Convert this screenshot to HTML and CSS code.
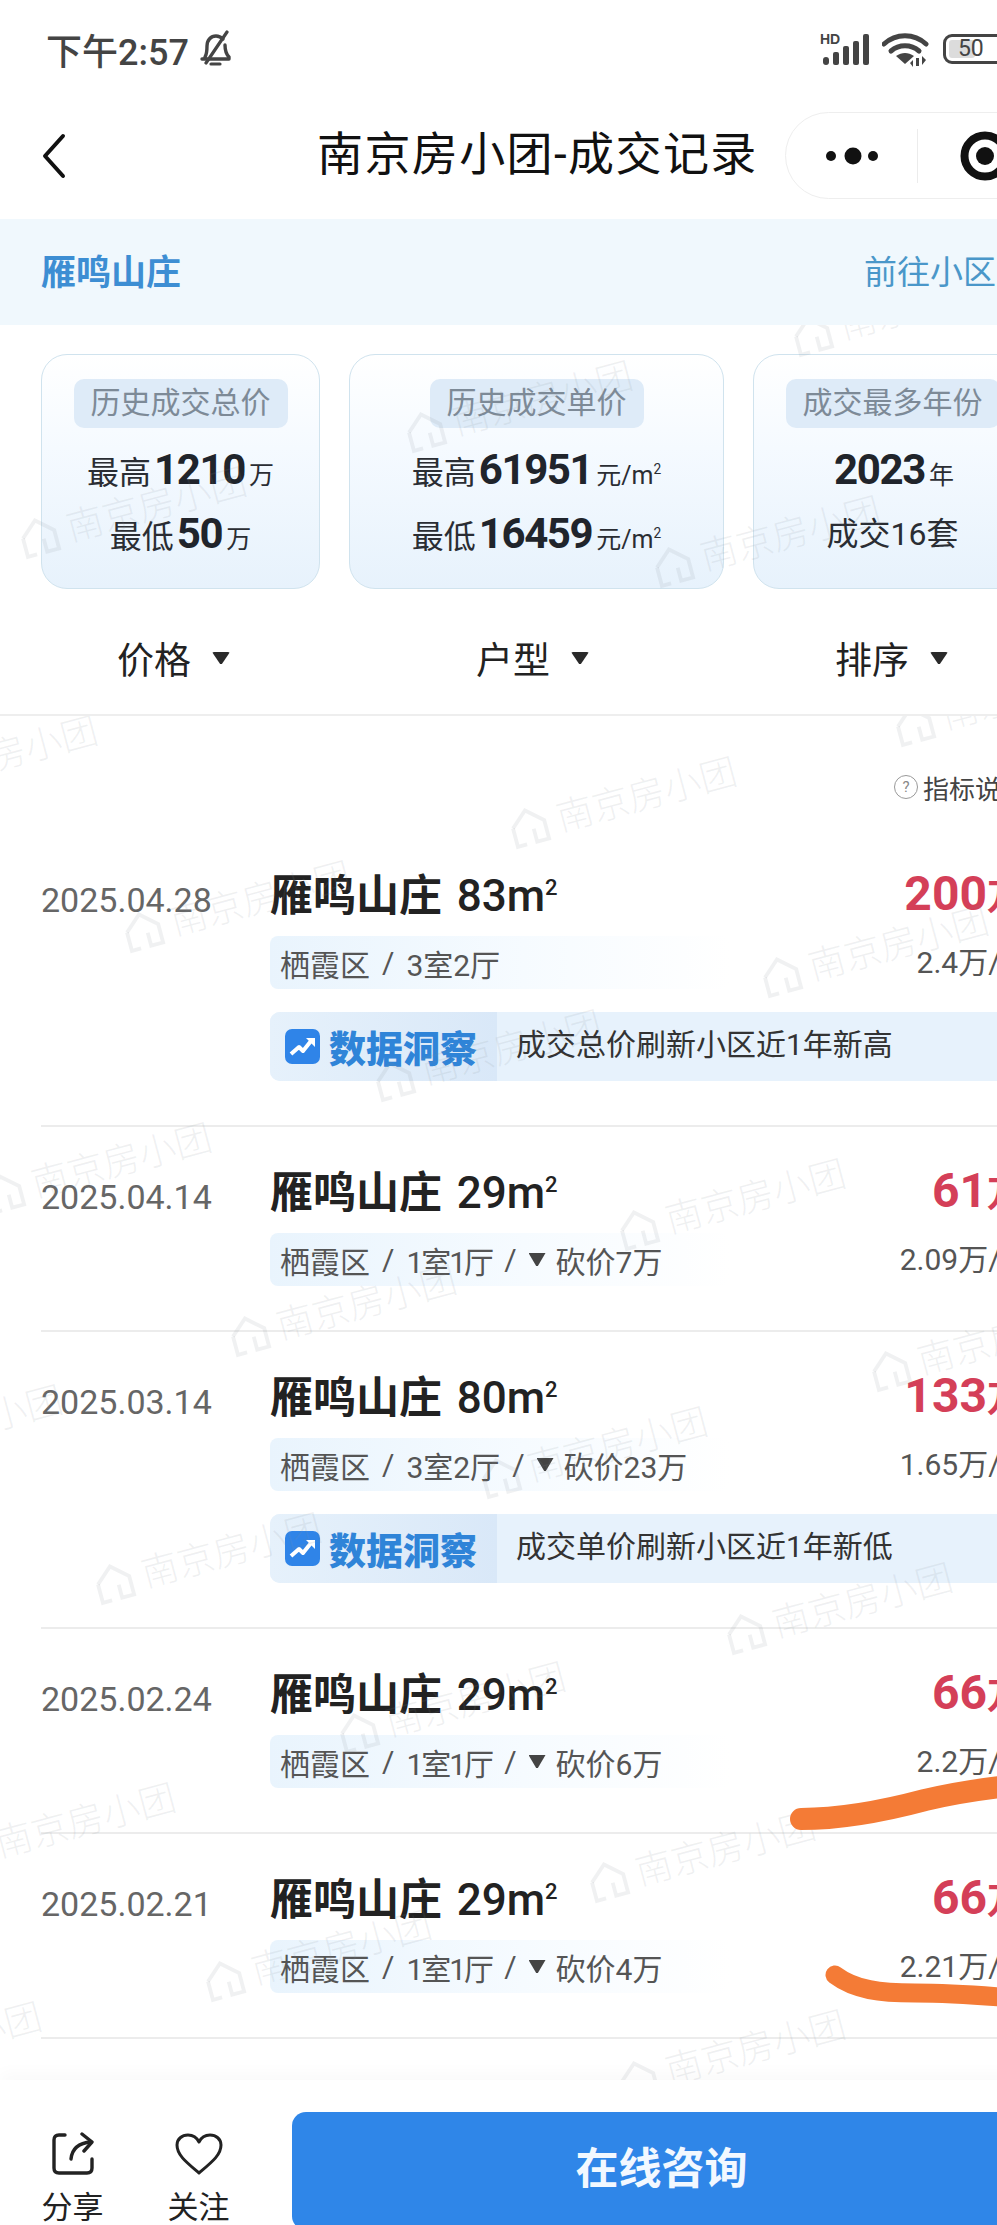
FILE: index.html
```html
<!DOCTYPE html>
<html lang="zh-CN">
<head>
<meta charset="utf-8">
<title>南京房小团-成交记录</title>
<link rel="stylesheet" href="styles.css">
</head>
<body>
<div class="page">
  <div class="top">
    <div class="status">
      <span class="time">下午2:57</span>
      <svg class="bell" viewBox="0 0 36 38"><path d="M8 27c2-3 2-6 2-11 0-6 4-10 9-10 3 0 5 1 7 3M28 15c0 6 1 9 4 12v2H5" fill="none" stroke="#444" stroke-width="3.4" stroke-linejoin="round" stroke-linecap="round"/><path d="M14 34h9M9 33 30 2" fill="none" stroke="#444" stroke-width="3.2" stroke-linecap="round"/></svg>
      <div class="status-right">
        <svg class="signal" viewBox="0 0 50 33"><text x="0" y="11" class="hd">HD</text><g fill="#444"><rect x="3" y="24" width="6" height="8" rx="3"/><rect x="13" y="19" width="6" height="13" rx="2"/><rect x="23" y="13" width="6" height="19" rx="2"/><rect x="33" y="8" width="6" height="24" rx="2"/><rect x="43" y="1" width="6" height="31" rx="2"/></g></svg>
        <svg class="wifi" viewBox="0 0 48 36"><g fill="none" stroke="#444" stroke-width="5" stroke-linecap="round"><path d="M2 13c12-11 30-11 42 0"/><path d="M9 20c8-7 20-7 28 0"/></g><path d="M14 26c6-4 12-4 18 0l-9 8z" fill="#444" transform="translate(0 -1)"/><path d="M31 36v-7l-3 3zM37 27v8h-3v-8zM40 25v9l4-5z" fill="#444"/></svg>
        <div class="battery"><span class="battery-fill"></span><span class="battery-num">50</span></div>
      </div>
    </div>
    <div class="nav">
      <svg class="back" viewBox="0 0 26 46"><path d="M22 3 4 23l18 20" fill="none" stroke="#111" stroke-width="4" stroke-linecap="round" stroke-linejoin="round"/></svg>
      <div class="nav-title">南京房小团-成交记录</div>
      <div class="capsule">
        <svg class="dots" viewBox="0 0 60 20"><circle cx="7" cy="10" r="5" fill="#111"/><circle cx="29" cy="10" r="8.5" fill="#111"/><circle cx="49" cy="10" r="5" fill="#111"/></svg>
        <span class="capsule-line"></span>
        <svg class="target" viewBox="0 0 50 50"><circle cx="25" cy="25" r="20.5" fill="none" stroke="#111" stroke-width="8"/><circle cx="25" cy="25" r="9" fill="#111"/></svg>
      </div>
    </div>
    <div class="band">
      <span class="band-name">雁鸣山庄</span>
      <span class="band-link">前往小区</span>
    </div>
  </div>

  <div class="cards">
    <div class="card card-a">
      <div class="card-label">历史成交总价</div>
      <div class="card-val">最高<b>1210</b><small>万</small></div>
      <div class="card-val">最低<b>50</b><small>万</small></div>
    </div>
    <div class="card card-b">
      <div class="card-label">历史成交单价</div>
      <div class="card-val">最高<b>61951</b><small>元/m<sup>2</sup></small></div>
      <div class="card-val">最低<b>16459</b><small>元/m<sup>2</sup></small></div>
    </div>
    <div class="card card-a">
      <div class="card-label">成交最多年份</div>
      <div class="card-val"><b>2023</b><small>年</small></div>
      <div class="card-val">成交16套</div>
    </div>
  </div>

  <div class="filters">
    <div class="filter">价格<span class="tri"></span></div>
    <div class="filter">户型<span class="tri"></span></div>
    <div class="filter">排序<span class="tri"></span></div>
  </div>

  <div class="help"><span class="help-icon">?</span>指标说明</div>

  <div class="row">
    <div class="date">2025.04.28</div>
    <div class="name">雁鸣山庄 <span class="area">83m<sup>2</sup></span></div>
    <div class="price">200<small>万</small></div>
    <div class="chip"><span>栖霞区</span><span>/</span><span>3室2厅</span></div>
    <div class="unit">2.4万/m<sup>2</sup></div>
    <div class="insight">
      <div class="insight-tag">
        <svg class="insight-icon" viewBox="0 0 35 35"><rect width="35" height="35" rx="7" fill="#2f84e8"/><path d="M6 25l8-7 4 4 8-10" fill="none" stroke="#fff" stroke-width="4" stroke-linejoin="round"/><path d="M21 9h9v9z" fill="#fff"/></svg>
        <span>数据洞察</span>
      </div>
      <div class="insight-text">成交总价刷新小区近1年新高</div>
    </div>
  </div>

  <div class="row">
    <div class="date">2025.04.14</div>
    <div class="name">雁鸣山庄 <span class="area">29m<sup>2</sup></span></div>
    <div class="price">61<small>万</small></div>
    <div class="chip"><span>栖霞区</span><span>/</span><span class="tight">1室1厅</span><span>/</span><span class="cut"><i class="down"></i>砍价7万</span></div>
    <div class="unit">2.09万/m<sup>2</sup></div>
  </div>

  <div class="row">
    <div class="date">2025.03.14</div>
    <div class="name">雁鸣山庄 <span class="area">80m<sup>2</sup></span></div>
    <div class="price">133<small>万</small></div>
    <div class="chip"><span>栖霞区</span><span>/</span><span>3室2厅</span><span>/</span><span class="cut"><i class="down"></i>砍价23万</span></div>
    <div class="unit">1.65万/m<sup>2</sup></div>
    <div class="insight">
      <div class="insight-tag">
        <svg class="insight-icon" viewBox="0 0 35 35"><rect width="35" height="35" rx="7" fill="#2f84e8"/><path d="M6 25l8-7 4 4 8-10" fill="none" stroke="#fff" stroke-width="4" stroke-linejoin="round"/><path d="M21 9h9v9z" fill="#fff"/></svg>
        <span>数据洞察</span>
      </div>
      <div class="insight-text">成交单价刷新小区近1年新低</div>
    </div>
  </div>

  <div class="row">
    <div class="date">2025.02.24</div>
    <div class="name">雁鸣山庄 <span class="area">29m<sup>2</sup></span></div>
    <div class="price">66<small>万</small></div>
    <div class="chip"><span>栖霞区</span><span>/</span><span class="tight">1室1厅</span><span>/</span><span class="cut"><i class="down"></i>砍价6万</span></div>
    <div class="unit">2.2万/m<sup>2</sup></div>
  </div>

  <div class="row">
    <div class="date">2025.02.21</div>
    <div class="name">雁鸣山庄 <span class="area">29m<sup>2</sup></span></div>
    <div class="price">66<small>万</small></div>
    <div class="chip"><span>栖霞区</span><span>/</span><span class="tight">1室1厅</span><span>/</span><span class="cut"><i class="down"></i>砍价4万</span></div>
    <div class="unit">2.21万/m<sup>2</sup></div>
  </div>

  <div class="footer">
    <div class="foot-item">
      <svg class="foot-icon" viewBox="0 0 44 44"><path d="M14 3H8Q3 3 3 8v28q0 5 5 5h28q5 0 5-5V27" fill="none" stroke="#222" stroke-width="3.4" stroke-linecap="round"/><path d="M20 27C21 17 27 11 40 10" fill="none" stroke="#222" stroke-width="3.4" stroke-linecap="round"/><path d="M31 2l10 8-8 9" fill="none" stroke="#222" stroke-width="3.4" stroke-linecap="round" stroke-linejoin="round"/></svg>
      <span>分享</span>
    </div>
    <div class="foot-item">
      <svg class="foot-icon foot-heart" viewBox="0 0 50 44"><path d="M25 41C12 30 3 23 3 13 3 7 8 3 14 3c5 0 9 3 11 7 2-4 6-7 11-7 6 0 11 4 11 10 0 10-9 17-22 28z" fill="none" stroke="#222" stroke-width="3" stroke-linejoin="round"/></svg>
      <span>关注</span>
    </div>
    <div class="cta">在线咨询</div>
  </div>

  <div class="marks">
    <div class="wm w1"><svg viewBox="0 0 40 42"><path d="M3 18 20 3l17 15v20H24V24" fill="none" stroke="currentColor" stroke-width="4"/><path d="M3 18v20h10" fill="none" stroke="currentColor" stroke-width="4"/></svg>南京房小团</div>
    <div class="wm w2"><svg viewBox="0 0 40 42"><path d="M3 18 20 3l17 15v20H24V24" fill="none" stroke="currentColor" stroke-width="4"/><path d="M3 18v20h10" fill="none" stroke="currentColor" stroke-width="4"/></svg>南京房小团</div>
    <div class="wm w3"><svg viewBox="0 0 40 42"><path d="M3 18 20 3l17 15v20H24V24" fill="none" stroke="currentColor" stroke-width="4"/><path d="M3 18v20h10" fill="none" stroke="currentColor" stroke-width="4"/></svg>南京房小团</div>
    <div class="wm w4"><svg viewBox="0 0 40 42"><path d="M3 18 20 3l17 15v20H24V24" fill="none" stroke="currentColor" stroke-width="4"/><path d="M3 18v20h10" fill="none" stroke="currentColor" stroke-width="4"/></svg>南京房小团</div>
    <div class="wm w5"><svg viewBox="0 0 40 42"><path d="M3 18 20 3l17 15v20H24V24" fill="none" stroke="currentColor" stroke-width="4"/><path d="M3 18v20h10" fill="none" stroke="currentColor" stroke-width="4"/></svg>南京房小团</div>
    <div class="wm w6"><svg viewBox="0 0 40 42"><path d="M3 18 20 3l17 15v20H24V24" fill="none" stroke="currentColor" stroke-width="4"/><path d="M3 18v20h10" fill="none" stroke="currentColor" stroke-width="4"/></svg>南京房小团</div>
    <div class="wm w7"><svg viewBox="0 0 40 42"><path d="M3 18 20 3l17 15v20H24V24" fill="none" stroke="currentColor" stroke-width="4"/><path d="M3 18v20h10" fill="none" stroke="currentColor" stroke-width="4"/></svg>南京房小团</div>
    <div class="wm w8"><svg viewBox="0 0 40 42"><path d="M3 18 20 3l17 15v20H24V24" fill="none" stroke="currentColor" stroke-width="4"/><path d="M3 18v20h10" fill="none" stroke="currentColor" stroke-width="4"/></svg>南京房小团</div>
    <div class="wm w9"><svg viewBox="0 0 40 42"><path d="M3 18 20 3l17 15v20H24V24" fill="none" stroke="currentColor" stroke-width="4"/><path d="M3 18v20h10" fill="none" stroke="currentColor" stroke-width="4"/></svg>南京房小团</div>
    <div class="wm w10"><svg viewBox="0 0 40 42"><path d="M3 18 20 3l17 15v20H24V24" fill="none" stroke="currentColor" stroke-width="4"/><path d="M3 18v20h10" fill="none" stroke="currentColor" stroke-width="4"/></svg>南京房小团</div>
    <div class="wm w11"><svg viewBox="0 0 40 42"><path d="M3 18 20 3l17 15v20H24V24" fill="none" stroke="currentColor" stroke-width="4"/><path d="M3 18v20h10" fill="none" stroke="currentColor" stroke-width="4"/></svg>南京房小团</div>
    <div class="wm w12"><svg viewBox="0 0 40 42"><path d="M3 18 20 3l17 15v20H24V24" fill="none" stroke="currentColor" stroke-width="4"/><path d="M3 18v20h10" fill="none" stroke="currentColor" stroke-width="4"/></svg>南京房小团</div>
    <div class="wm w13"><svg viewBox="0 0 40 42"><path d="M3 18 20 3l17 15v20H24V24" fill="none" stroke="currentColor" stroke-width="4"/><path d="M3 18v20h10" fill="none" stroke="currentColor" stroke-width="4"/></svg>南京房小团</div>
    <div class="wm w14"><svg viewBox="0 0 40 42"><path d="M3 18 20 3l17 15v20H24V24" fill="none" stroke="currentColor" stroke-width="4"/><path d="M3 18v20h10" fill="none" stroke="currentColor" stroke-width="4"/></svg>南京房小团</div>
    <div class="wm w15"><svg viewBox="0 0 40 42"><path d="M3 18 20 3l17 15v20H24V24" fill="none" stroke="currentColor" stroke-width="4"/><path d="M3 18v20h10" fill="none" stroke="currentColor" stroke-width="4"/></svg>南京房小团</div>
    <div class="wm w16"><svg viewBox="0 0 40 42"><path d="M3 18 20 3l17 15v20H24V24" fill="none" stroke="currentColor" stroke-width="4"/><path d="M3 18v20h10" fill="none" stroke="currentColor" stroke-width="4"/></svg>南京房小团</div>
    <div class="wm w17"><svg viewBox="0 0 40 42"><path d="M3 18 20 3l17 15v20H24V24" fill="none" stroke="currentColor" stroke-width="4"/><path d="M3 18v20h10" fill="none" stroke="currentColor" stroke-width="4"/></svg>南京房小团</div>
    <div class="wm w18"><svg viewBox="0 0 40 42"><path d="M3 18 20 3l17 15v20H24V24" fill="none" stroke="currentColor" stroke-width="4"/><path d="M3 18v20h10" fill="none" stroke="currentColor" stroke-width="4"/></svg>南京房小团</div>
    <div class="wm w19"><svg viewBox="0 0 40 42"><path d="M3 18 20 3l17 15v20H24V24" fill="none" stroke="currentColor" stroke-width="4"/><path d="M3 18v20h10" fill="none" stroke="currentColor" stroke-width="4"/></svg>南京房小团</div>
    <div class="wm w20"><svg viewBox="0 0 40 42"><path d="M3 18 20 3l17 15v20H24V24" fill="none" stroke="currentColor" stroke-width="4"/><path d="M3 18v20h10" fill="none" stroke="currentColor" stroke-width="4"/></svg>南京房小团</div>
    <div class="wm w21"><svg viewBox="0 0 40 42"><path d="M3 18 20 3l17 15v20H24V24" fill="none" stroke="currentColor" stroke-width="4"/><path d="M3 18v20h10" fill="none" stroke="currentColor" stroke-width="4"/></svg>南京房小团</div>
    <div class="wm w22"><svg viewBox="0 0 40 42"><path d="M3 18 20 3l17 15v20H24V24" fill="none" stroke="currentColor" stroke-width="4"/><path d="M3 18v20h10" fill="none" stroke="currentColor" stroke-width="4"/></svg>南京房小团</div>
    <div class="wm w23"><svg viewBox="0 0 40 42"><path d="M3 18 20 3l17 15v20H24V24" fill="none" stroke="currentColor" stroke-width="4"/><path d="M3 18v20h10" fill="none" stroke="currentColor" stroke-width="4"/></svg>南京房小团</div>
    <div class="wm w24"><svg viewBox="0 0 40 42"><path d="M3 18 20 3l17 15v20H24V24" fill="none" stroke="currentColor" stroke-width="4"/><path d="M3 18v20h10" fill="none" stroke="currentColor" stroke-width="4"/></svg>南京房小团</div>
  </div>

  <svg class="scribble" viewBox="0 0 997 2225">
    <path d="M801 1819C840 1819 880 1812 925 1800C950 1794 975 1790 1000 1787" fill="none" stroke="#f47b36" stroke-width="22" stroke-linecap="round"/>
    <path d="M835 1975C855 1990 880 1993 915 1993C945 1993 975 1995 1000 1997" fill="none" stroke="#f47b36" stroke-width="19" stroke-linecap="round"/>
  </svg>
</div>
</body>
</html>
```

FILE: styles.css
```css
html, body {
  margin: 0;
  padding: 0;
  width: 997px;
  height: 2225px;
  overflow: hidden;
  background: #fff;
}

.page {
  position: relative;
  width: 1078px;
  height: 2225px;
  overflow: hidden;
  background: #fff;
  font-family: Roboto, "Noto Sans CJK SC", sans-serif;
  color: #222;
}

sup {
  font-size: 0.55em;
  line-height: 0;
  vertical-align: baseline;
  position: relative;
  top: -0.75em;
}

/* top */
.top {
  position: relative;
  z-index: 3;
  background: #fff;
}

.status {
  display: flex;
  align-items: center;
  height: 92px;
  padding: 6px 0 0 46px;
  box-sizing: border-box;
  color: #444;
}

.time {
  font-size: 36px;
  font-weight: 500;
}

.bell {
  width: 36px;
  height: 38px;
  margin-left: 8px;
}

.status-right {
  display: flex;
  align-items: center;
  margin-left: 587px;
}

.signal {
  width: 50px;
  height: 33px;
}

.hd {
  font: 700 14px "Liberation Sans", sans-serif;
  fill: #444;
}

.wifi {
  width: 48px;
  height: 36px;
  margin-left: 12px;
}

.battery {
  position: relative;
  width: 62px;
  height: 30px;
  margin-left: 13px;
  border: 3px solid #444;
  border-radius: 9px;
  box-sizing: border-box;
}

.battery-fill {
  display: block;
  width: 26px;
  height: 18px;
  margin: 3px;
  background: #dcdcdc;
  border-radius: 3px;
}

.battery-num {
  position: absolute;
  left: 12px;
  top: 0;
  font-size: 23px;
  line-height: 24px;
  color: #444;
}

.nav {
  display: flex;
  align-items: center;
  height: 127px;
  padding-left: 41px;
}

.back {
  width: 26px;
  height: 46px;
}

.nav-title {
  margin-left: 250px;
  margin-bottom: 3px;
  font-size: 46px;
  letter-spacing: 1.4px;
  line-height: 60px;
  color: #111;
  white-space: nowrap;
}

.capsule {
  display: flex;
  align-items: center;
  width: 280px;
  height: 87px;
  margin-left: 27px;
  border: 1.5px solid #eee;
  border-radius: 44px;
  box-sizing: border-box;
  flex: none;
}

.dots {
  width: 60px;
  height: 20px;
  margin-left: 38px;
}

.capsule-line {
  width: 1px;
  height: 54px;
  margin-left: 33px;
  background: #ececec;
}

.target {
  width: 50px;
  height: 50px;
  margin-left: 42px;
}

.band {
  display: flex;
  align-items: center;
  justify-content: space-between;
  height: 106px;
  padding: 0 82px 5px 41px;
  box-sizing: border-box;
  background: #f0f8fd;
}

.band-name {
  font-size: 35px;
  font-weight: 700;
  color: #3d8ed3;
}

.band-link {
  font-size: 33px;
  color: #4a97c9;
}

/* cards */
.cards {
  display: flex;
  gap: 29px;
  padding: 29px 0 0 41px;
}

.card {
  flex: none;
  height: 235px;
  padding-top: 24px;
  border: 1.5px solid #d0e3ee;
  border-radius: 26px;
  background: linear-gradient(180deg, #fff 0%, #f5faff 40%, #e7f2fc 100%);
  box-sizing: border-box;
  display: flex;
  flex-direction: column;
  align-items: center;
}

.card-a {
  width: 279px;
}

.card-b {
  width: 375px;
}

.card-label {
  height: 49px;
  line-height: 47px;
  padding: 0 17px;
  font-size: 30px;
  color: #7d8a97;
  background: #deebf8;
  border-radius: 10px;
  white-space: nowrap;
}

.card-val {
  height: 64px;
  display: flex;
  align-items: baseline;
  justify-content: center;
  line-height: 64px;
  font-size: 32px;
  color: #2a2d33;
  white-space: nowrap;
}

.card-label + .card-val {
  margin-top: 10px;
}

.card-val b {
  font-size: 42px;
  font-weight: 700;
  letter-spacing: -1.4px;
  margin: 0 4px 0 3px;
  color: #20242b;
}

.card-val small {
  font-size: 25px;
}

/* filters */
.filters {
  position: relative;
  z-index: 3;
  display: flex;
  gap: 246px;
  align-items: center;
  height: 116px;
  margin-top: 11px;
  padding-left: 117px;
  background: #fff;
  border-bottom: 2px solid #eee;
  box-sizing: border-box;
}

.filter {
  display: flex;
  align-items: center;
  gap: 21px;
  font-size: 37px;
  color: #222;
  margin-top: 2px;
}

.tri {
  width: 18px;
  height: 12px;
  background: #2a2a2a;
  clip-path: polygon(0 0, 100% 0, 55% 100%, 45% 100%);
  border-radius: 2px;
}

/* help */
.help {
  display: flex;
  align-items: center;
  justify-content: flex-end;
  gap: 5px;
  height: 114px;
  padding: 28px 51px 0 0;
  box-sizing: border-box;
  font-size: 26px;
  color: #444;
}

.help-icon {
  width: 22px;
  height: 22px;
  border: 1.5px solid #999;
  border-radius: 50%;
  text-align: center;
  line-height: 22px;
  font-size: 15px;
  color: #888;
}

/* rows */
.row {
  display: grid;
  grid-template-columns: 229px 1fr auto;
  grid-template-rows: 58px 53px;
  row-gap: 11px;
  margin: 0 41px;
  padding: 37px 0 44px;
  border-bottom: 2px solid #ececec;
  box-sizing: border-box;
}

.date {
  grid-column: 1;
  grid-row: 1;
  align-self: center;
  font-size: 34px;
  color: #666;
  line-height: 40px;
  margin-top: 7px;
}

.name {
  grid-column: 2;
  grid-row: 1;
  font-size: 43px;
  font-weight: 700;
  line-height: 58px;
  color: #222;
  white-space: nowrap;
}

.area {
  margin-left: 4px;
  font-size: 44px;
  font-weight: 500;
}

.area sup {
  font-size: 22px;
  font-weight: 500;
}

.price {
  grid-column: 3;
  grid-row: 1;
  align-self: center;
  text-align: right;
  font-size: 48px;
  font-weight: 700;
  line-height: 58px;
  color: #d43f58;
  padding-right: 14px;
}

.price small {
  font-size: 36px;
  font-weight: 700;
}

.chip {
  grid-column: 2;
  grid-row: 2;
  display: flex;
  align-items: center;
  gap: 12px;
  width: 460px;
  height: 53px;
  padding-left: 10px;
  box-sizing: border-box;
  font-size: 30px;
  color: #555;
  background: linear-gradient(90deg, #e9f4fd 0%, #f6fbff 55%, rgba(255, 255, 255, 0) 100%);
  border-radius: 8px;
  white-space: nowrap;
}

.tight {
  letter-spacing: -2px;
}

.cut {
  display: flex;
  align-items: center;
  gap: 10px;
}

.down {
  width: 17px;
  height: 13px;
  background: #444;
  clip-path: polygon(0 0, 100% 0, 55% 100%, 45% 100%);
}

.unit {
  grid-column: 3;
  grid-row: 2;
  align-self: center;
  text-align: right;
  font-size: 30px;
  color: #555;
  line-height: 53px;
}

.unit sup {
  font-size: 18px;
}

.insight {
  grid-column: 2 / 4;
  grid-row: 3;
  display: flex;
  align-items: stretch;
  height: 69px;
  margin-top: 12px;
  background: #e7f2fc;
  border-radius: 10px;
  overflow: hidden;
}

.insight-tag {
  display: flex;
  align-items: center;
  gap: 9px;
  width: 227px;
  padding-left: 15px;
  box-sizing: border-box;
  background: linear-gradient(90deg, #e6f1fb, #d9e8f8);
  font-size: 37px;
  font-weight: 900;
  color: #2f84d8;
  white-space: nowrap;
}

.insight-icon {
  width: 35px;
  height: 35px;
  flex: none;
}

.insight-text {
  margin-left: 19px;
  line-height: 66px;
  font-size: 30px;
  color: #333;
  white-space: nowrap;
}

/* footer */
.footer {
  position: relative;
  z-index: 3;
  display: flex;
  align-items: flex-start;
  height: 150px;
  margin-top: 41px;
  padding: 32px 0 0 41px;
  box-sizing: border-box;
  background: #fff;
  box-shadow: 0 -8px 14px rgba(0, 0, 0, 0.025);
}

.foot-item {
  display: flex;
  flex-direction: column;
  align-items: center;
  width: 63px;
  margin-right: 63px;
  padding-top: 20px;
  font-size: 31px;
  line-height: 40px;
  color: #222;
  white-space: nowrap;
}

.foot-icon {
  width: 44px;
  height: 44px;
  margin-bottom: 12px;
}

.foot-heart {
  width: 50px;
}

.cta {
  flex: none;
  width: 747px;
  height: 118px;
  margin-left: -1px;
  background: #2f86e8;
  border-radius: 14px;
  text-align: center;
  line-height: 114px;
  font-size: 43px;
  font-weight: 700;
  color: #f2f8ff;
  padding-right: 8px;
  box-sizing: border-box;
}

/* overlays */
.marks {
  position: absolute;
  inset: 0;
  z-index: 2;
  pointer-events: none;
}

.wm {
  position: absolute;
  display: flex;
  align-items: center;
  gap: 10px;
  height: 50px;
  margin-top: -25px;
  transform: rotate(-15deg);
  transform-origin: left center;
  font-size: 37px;
  font-weight: 300;
  line-height: 50px;
  color: rgba(130, 140, 150, 0.12);
  white-space: nowrap;
}

.wm svg {
  width: 38px;
  height: 40px;
  flex: none;
}

.w1 { left: 794px; top: 340px; }
.w2 { left: 407px; top: 436px; }
.w3 { left: 21px; top: 542px; }
.w4 { left: 655px; top: 571px; }
.w5 { left: -128px; top: 791px; }
.w6 { left: 896px; top: 730px; }
.w7 { left: 511px; top: 832px; }
.w8 { left: 125px; top: 936px; }
.w9 { left: 763px; top: 981px; }
.w10 { left: 376px; top: 1085px; }
.w11 { left: -14px; top: 1198px; }
.w12 { left: 620px; top: 1234px; }
.w13 { left: 231px; top: 1340px; }
.w14 { left: 872px; top: 1375px; }
.w15 { left: -163px; top: 1460px; }
.w16 { left: 482px; top: 1482px; }
.w17 { left: 96px; top: 1588px; }
.w18 { left: 727px; top: 1638px; }
.w19 { left: 340px; top: 1737px; }
.w20 { left: -50px; top: 1858px; }
.w21 { left: 590px; top: 1886px; }
.w22 { left: 206px; top: 1985px; }
.w23 { left: -184px; top: 2077px; }
.w24 { left: 620px; top: 2085px; }

.scribble {
  position: absolute;
  left: 0;
  top: 0;
  width: 997px;
  height: 2225px;
  z-index: 2;
  pointer-events: none;
}
```
